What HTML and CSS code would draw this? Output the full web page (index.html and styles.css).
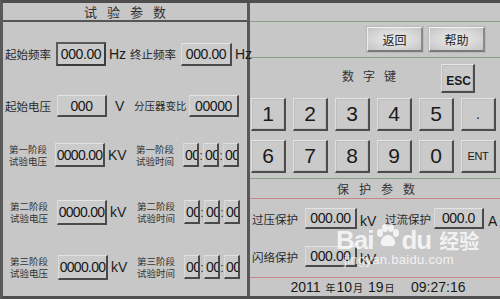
FILE: index.html
```html
<!DOCTYPE html>
<html lang="zh">
<head>
<meta charset="utf-8">
<title>试验参数</title>
<link rel="stylesheet" href="styles.css">
</head>
<body>
<div class="screen">
  <section class="left">
    <div class="title">试验参数</div>
    <div class="rows">
      <div class="row">
        <span class="lbl l48 ml2">起始频率</span>
        <span class="fld framed w50 h24 ml3">000.00</span>
        <span class="unit w22">Hz</span>
        <span class="lbl l48 ml2">终止频率</span>
        <span class="fld w51 h23 ml3">000.00</span>
        <span class="unit w20">Hz</span>
      </div>
      <div class="row">
        <span class="lbl l48 ml2">起始电压</span>
        <span class="fld w50 h22 ml4">000</span>
        <span class="unit w27 pl8">V</span>
        <span class="lbl l55 small11">分压器变比</span>
        <span class="fld w50 h22">00000</span>
      </div>
      <div class="row">
        <span class="lbl2 ml5">第一阶段<br>试验电压</span>
        <span class="fld big w50 h24 ml7">0000.00</span>
        <span class="unit w27">KV</span>
        <span class="lbl2 ml3">第一阶段<br>试验时间</span>
        <span class="time ml8"><span class="tb">00</span><span class="colon">:</span><span class="tb">00</span><span class="colon">:</span><span class="tb">00</span></span>
      </div>
      <div class="row">
        <span class="lbl2 ml6">第二阶段<br>试验电压</span>
        <span class="fld big w50 h25 ml8">0000.00</span>
        <span class="unit w27">kV</span>
        <span class="lbl2 ml2">第二阶段<br>试验时间</span>
        <span class="time ml8"><span class="tb">00</span><span class="colon">:</span><span class="tb">00</span><span class="colon">:</span><span class="tb">00</span></span>
      </div>
      <div class="row">
        <span class="lbl2 ml6">第三阶段<br>试验电压</span>
        <span class="fld big w50 h25 ml9">0000.00</span>
        <span class="unit w27">kV</span>
        <span class="lbl2 ml1">第三阶段<br>试验时间</span>
        <span class="time ml8"><span class="tb">00</span><span class="colon">:</span><span class="tb">00</span><span class="colon">:</span><span class="tb">00</span></span>
      </div>
    </div>
  </section>

  <section class="right">
    <div class="rtop"></div>
    <div class="btnbar">
      <button class="btn">返回</button>
      <button class="btn">帮助</button>
    </div>
    <div class="keypad">
      <div class="kphead">
        <span class="kptitle">数字键</span>
        <button class="key esc">ESC</button>
      </div>
      <div class="keys">
        <button class="key">1</button>
        <button class="key">2</button>
        <button class="key">3</button>
        <button class="key">4</button>
        <button class="key">5</button>
        <button class="key dot">.</button>
        <button class="key">6</button>
        <button class="key">7</button>
        <button class="key">8</button>
        <button class="key">9</button>
        <button class="key">0</button>
        <button class="key ent">ENT</button>
      </div>
    </div>
    <div class="ptitle">保护参数</div>
    <div class="pbody">
      <div class="prow">
        <span class="plbl">过压保护</span>
        <span class="fld w52 h21 ml6">000.00</span>
        <span class="unit w25 low">kV</span>
        <span class="plbl">过流保护</span>
        <span class="fld w50 h21 ml2">000.0</span>
        <span class="unit w14 pl4 low">A</span>
      </div>
      <div class="prow">
        <span class="plbl">闪络保护</span>
        <span class="fld w52 h21 ml6">000.00</span>
        <span class="unit w25 low">kV</span>
      </div>
    </div>
    <div class="date">2011 <small>年</small>10<small>月</small> 19<small>日</small>&nbsp;&nbsp;&nbsp;&nbsp;09:27:16</div>
  </section>

  <div class="watermark">
    <div class="wm-top">
      <span class="wm-bai">Bai</span>
      <svg class="paw" width="26" height="26" viewBox="0 0 26 26">
        <ellipse cx="6" cy="10" rx="3" ry="4"/>
        <ellipse cx="11" cy="5" rx="3" ry="4"/>
        <ellipse cx="17" cy="5" rx="3" ry="4"/>
        <ellipse cx="22" cy="10" rx="3" ry="4"/>
        <path d="M14 12 C9 12 6 18 7 21 C8 24 12 23 14 23 C16 23 20 24 21 21 C22 18 19 12 14 12 Z"/>
      </svg>
      <span class="wm-du">du</span>
      <span class="wm-jy">经验</span>
    </div>
    <div class="wm-url">jingyan.baidu.com</div>
  </div>
</div>
</body>
</html>
```

FILE: styles.css
```css
* {
  box-sizing: border-box;
  margin: 0;
  padding: 0;
}

body {
  width: 500px;
  height: 299px;
  overflow: hidden;
  background: #c6c6c6;
  font-family: "Noto Sans CJK SC", "Noto Sans", sans-serif;
  color: #262626;
}

.screen {
  position: relative;
  display: flex;
  width: 500px;
  height: 299px;
  background: #c7c7c7;
  border-top: 3px solid #4e4e4e;
  border-left: 3px solid #5a5a5a;
  border-bottom: 3px solid #4e4e4e;
}

/* ---------- left panel ---------- */
.left {
  width: 247px;
  border-right: 3px solid #585858;
  display: flex;
  flex-direction: column;
}

.title {
  height: 19px;
  border-bottom: 2px solid #555;
  text-align: center;
  font-size: 13px;
  line-height: 17px;
  letter-spacing: 10px;
  padding-left: 10px;
  color: #333;
}

.rows {
  display: grid;
  padding-top: 19px;
  grid-template-rows: 52px 49px 57px 55px 26px;
}

.row {
  display: flex;
  align-items: center;
  height: 26px;
}

.lbl {
  font-size: 11.5px;
  line-height: 14px;
  white-space: nowrap;
  color: #2a2a2a;
}

.l48 { width: 48px; }
.l55 { width: 55px; }

.small11 {
  font-size: 10.5px;
  letter-spacing: 0;
}

.lbl2 {
  width: 40px;
  font-size: 9.5px;
  line-height: 12px;
  text-align: center;
  color: #333;
  white-space: nowrap;
}

.fld {
  display: flex;
  align-items: center;
  justify-content: center;
  background: #cbcbcb;
  font-family: "Liberation Sans", Arial, sans-serif;
  font-size: 14px;
  letter-spacing: -0.4px;
  color: #161616;
  border-top: 1px solid #e4e4e4;
  border-left: 1px solid #dcdcdc;
  border-right: 2px solid #4a4a4a;
  border-bottom: 2px solid #4a4a4a;
  overflow: hidden;
  white-space: nowrap;
}

.fld.framed {
  border: 2px solid #5a5a5a;
  border-right-color: #3c3c3c;
  border-bottom-color: #3c3c3c;
}

.fld.big {
  font-size: 14px;
  letter-spacing: -0.7px;
}

.unit {
  font-family: "Liberation Sans", Arial, sans-serif;
  font-size: 14px;
  color: #1c1c1c;
  padding-left: 3px;
  white-space: nowrap;
}

.unit.low {
  align-self: flex-end;
  line-height: 16px;
}

.w14 { width: 14px; }
.w20 { width: 20px; }
.w22 { width: 22px; }
.w25 { width: 25px; }
.w27 { width: 27px; }
.w50 { width: 50px; }
.w51 { width: 51px; }
.w52 { width: 52px; }
.h21 { height: 21px; }
.h22 { height: 22px; }
.h23 { height: 23px; }
.h24 { height: 24px; }
.h25 { height: 25px; }
.ml1 { margin-left: 1px; }
.ml2 { margin-left: 2px; }
.ml3 { margin-left: 3px; }
.ml4 { margin-left: 4px; }
.ml5 { margin-left: 5px; }
.ml6 { margin-left: 6px; }
.ml7 { margin-left: 7px; }
.ml8 { margin-left: 8px; }
.ml9 { margin-left: 9px; }
.pl4 { padding-left: 4px; }
.pl8 { padding-left: 8px; }

.time {
  display: flex;
  align-items: center;
  height: 24px;
}

.tb {
  width: 16px;
  height: 24px;
  display: flex;
  align-items: center;
  justify-content: flex-start;
  padding-left: 1px;
  overflow: hidden;
  background: #cbcbcb;
  font-family: "Liberation Sans", Arial, sans-serif;
  font-size: 14px;
  letter-spacing: -0.5px;
  color: #161616;
  border-top: 1px solid #e0e0e0;
  border-left: 1px solid #d8d8d8;
  border-right: 2px solid #4a4a4a;
  border-bottom: 2px solid #4a4a4a;
}

.colon {
  width: 4px;
  font-family: "Liberation Sans", Arial, sans-serif;
  font-size: 13px;
  text-align: center;
  color: #333;
}

/* ---------- right panel ---------- */
.right {
  flex: 1;
  display: flex;
  flex-direction: column;
}

.rtop {
  height: 19px;
  border-bottom: 1px solid #86a286;
}

.btnbar {
  height: 36px;
  display: flex;
  justify-content: flex-end;
  gap: 6px;
  padding: 5px 15px 0 0;
  border-bottom: 1px solid #86a286;
}

.btn {
  width: 56px;
  height: 25px;
  font-family: "Noto Sans CJK SC", sans-serif;
  font-size: 12px;
  color: #222;
  background: radial-gradient(ellipse at center, #ececec 0%, #d6d6d6 60%, #c4c4c4 100%);
  border-top: 1px solid #f4f4f4;
  border-left: 1px solid #eeeeee;
  border-right: 2px solid #8a8a8a;
  border-bottom: 2px solid #7a7a7a;
  box-shadow: 0 0 0 1px #b9b9b9;
}

.keypad {
  height: 121px;
  padding: 6px 0 0 1px;
  border-bottom: 1px solid #86a286;
}

.kphead {
  display: flex;
  align-items: center;
  height: 29px;
}

.kptitle {
  margin-left: 91px;
  margin-top: -6px;
  font-size: 12px;
  letter-spacing: 9px;
  color: #333;
}

.key {
  width: 35px;
  height: 33px;
  font-family: "Liberation Sans", Arial, sans-serif;
  font-size: 21px;
  color: #1a1a1a;
  background: #cacaca;
  border-top: 1px solid #e6e6e6;
  border-left: 1px solid #e0e0e0;
  border-right: 2px solid #4c4c4c;
  border-bottom: 2px solid #4c4c4c;
  box-shadow: inset 0 0 0 1px #bdbdbd;
}

.key.esc {
  width: 34px;
  height: 29px;
  margin-left: auto;
  margin-right: 25px;
  font-size: 12px;
  font-weight: bold;
  padding-top: 6px;
  padding-left: 2px;
}

.key.dot {
  font-size: 14px;
}

.key.ent {
  font-size: 11px;
  letter-spacing: -0.3px;
}

.keys {
  display: grid;
  grid-template-columns: repeat(6, 35px);
  column-gap: 7px;
  row-gap: 9px;
  margin-top: 5px;
}

.ptitle {
  height: 20px;
  border-bottom: 1px solid #c98686;
  text-align: center;
  font-size: 12px;
  line-height: 19px;
  letter-spacing: 10px;
  padding-left: 12px;
  color: #333;
}

.pbody {
  height: 79px;
  padding-top: 9px;
  display: flex;
  flex-direction: column;
  gap: 17px;
  border-bottom: 1px solid #c98686;
}

.prow {
  display: flex;
  align-items: center;
  height: 21px;
}

.plbl {
  width: 47px;
  margin-left: 2px;
  font-size: 11.5px;
  white-space: nowrap;
  color: #2a2a2a;
}

.prow .plbl + .fld + .unit + .plbl {
  margin-left: 3px;
}

.date {
  flex: 1;
  display: flex;
  align-items: center;
  justify-content: center;
  padding-left: 6px;
  font-family: "Liberation Sans", Arial, sans-serif;
  font-size: 14px;
  color: #1a1a1a;
  white-space: pre;
}

.date small {
  font-family: "Noto Sans CJK SC", sans-serif;
  font-size: 10px;
  padding: 0 1px;
}

/* ---------- watermark overlay ---------- */
.watermark {
  position: absolute;
  left: 333px;
  top: 222px;
  color: rgba(255, 255, 255, 0.78);
  pointer-events: none;
}

.wm-top {
  display: flex;
  align-items: center;
}

.wm-bai,
.wm-du {
  font-family: "Liberation Sans", Arial, sans-serif;
  font-weight: bold;
  font-size: 26px;
  letter-spacing: -1px;
}

.paw {
  fill: rgba(255, 255, 255, 0.78);
  margin: -10px 1px 0 1px;
}

.wm-jy {
  margin-left: 8px;
  font-size: 20px;
  font-weight: bold;
}

.wm-url {
  margin-top: -4px;
  padding-left: 8px;
  font-family: "Liberation Sans", Arial, sans-serif;
  font-size: 13px;
  letter-spacing: 0.3px;
}
```
